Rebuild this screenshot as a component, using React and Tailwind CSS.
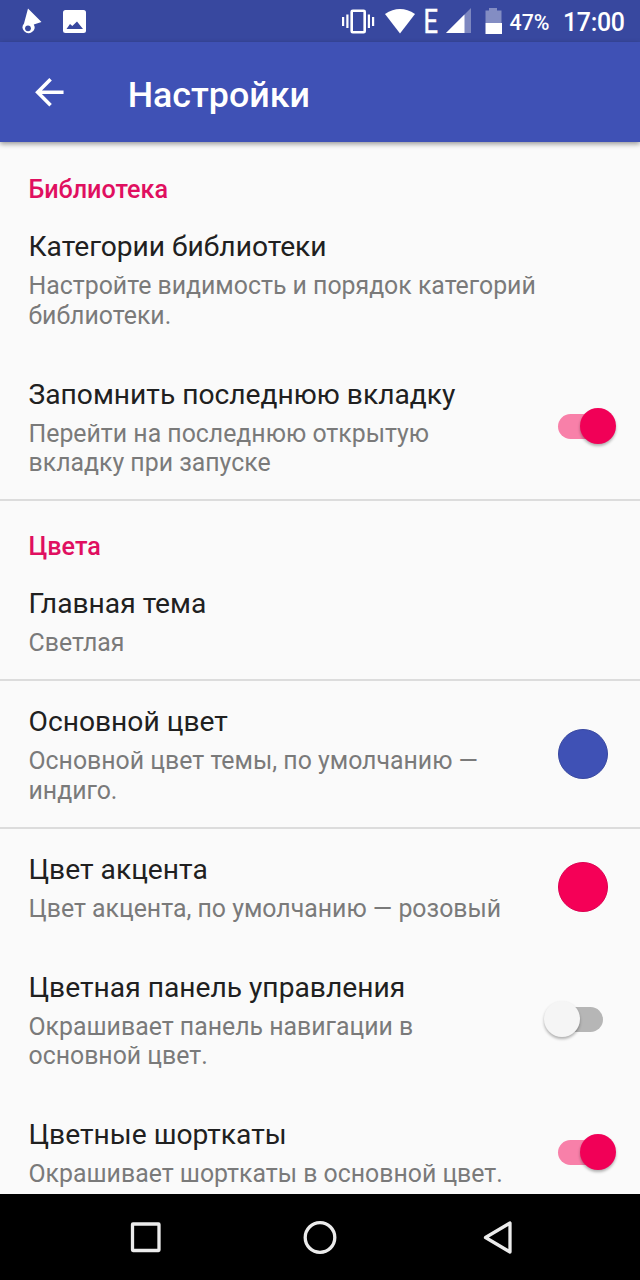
import { useState } from "react";

function StatusBar() {
    return (
        <div className="flex h-[42px] shrink-0 items-center bg-[#38489f]">
            <svg width="640" height="42" viewBox="0 0 640 42" fill="#fff">
                {/* Notifications */}
                <path d="M28 8.500L41.500 22L33.800 24.500A5.900 5.900 0 1 1 24 23.500Z" />
                <circle cx="28" cy="28.300" r="2.900" fill="#38489f" />
                <rect x="63" y="10" width="23" height="23" rx="2.5" />
                <path d="M66.500 29L70 24L72.300 26L77 21.500L83 29Z" fill="#38489f" />

                {/* Vibrate */}
                <rect x="351.7" y="10.7" width="13" height="21.6" rx="1" fill="none" stroke="#fff" strokeWidth="2.6" />
                <path d="M342 17h2.2v9h-2.2zM346.3 14.5h2.2v13.5h-2.2zM367.8 14.5h2.2v13.5h-2.2zM372 17h2.2v9h-2.2z" />

                {/* Wifi */}
                <path d="M385 14Q400 4 415 14L400 33.5Z" />

                {/* Signal */}
                <path d="M471 8V33H446Z" fillOpacity="0.35" />
                <path d="M464.5 14.5V33H446Z" />

                {/* Battery */}
                <path d="M485.5 10.5h3.5V8h8v2.5h4.5V23h-16z" fillOpacity="0.38" />
                <path d="M485.5 23h16.5v11h-16.5z" />

                <g fontFamily="Roboto, sans-serif">
                    <text x="423.5" y="32.7" fontSize="33.5" textLength="14.5" lengthAdjust="spacingAndGlyphs" stroke="#fff" strokeWidth="0.5">E</text>
                    <text x="509.5" y="29.5" fontSize="21.3" fontWeight="500" textLength="40">47%</text>
                    <text x="563" y="31" fontSize="24.9" fontWeight="500" textLength="62">17:00</text>
                </g>
            </svg>
        </div>
    );
}

function Toolbar() {
    return (
        <div className="z-10 flex h-[100px] shrink-0 items-center bg-[#3f51b5] pl-[28px] shadow-[0_2px_5px_rgba(0,0,0,0.4)]">
            <button className="mt-px">
                <svg width="42.67" height="42.67" viewBox="0 0 24 24" fill="#fff">
                    <path d="M20 11H7.83l5.59-5.59L12 4l-8 8 8 8 1.41-1.41L7.83 13H20v-2z" />
                </svg>
            </button>
            <h1 className="mt-[5px] ml-[57px] text-[35.8px] leading-[42px] font-medium text-white">Настройки</h1>
        </div>
    );
}

function Category({ children, className }) {
    return (
        <div className={`shrink-0 pl-[28.5px] text-[25.2px] leading-[30px] font-medium text-[#e00f60] ${className}`}>
            {children}
        </div>
    );
}

function Row({ title, summary, divider, children }) {
    return (
        <div
            className={`flex shrink-0 items-center justify-between border-b-2 pl-[28.5px] ${
                summary.length > 1 ? "h-[147.5px]" : "h-[118px]"
            } ${divider ? "border-[#dcdcdc]" : "border-transparent"}`}
        >
            <div className="pt-[2px] whitespace-nowrap">
                <div className="text-[28.2px] leading-[36px] text-[#202020]">{title}</div>
                <div className="mt-[6px] text-[24.85px] leading-[29.5px] text-[#7a7a7a]">
                    {summary.map((line) => (
                        <div key={line}>{line}</div>
                    ))}
                </div>
            </div>
            {children}
        </div>
    );
}

function Switch({ defaultOn }) {
    const [on, setOn] = useState(defaultOn);

    return (
        <button className="mr-6 flex h-9 w-[72px] items-center" onClick={() => setOn(!on)}>
            <span
                className={`ml-3.5 flex h-[25px] w-[45px] items-center rounded-full ${
                    on ? "bg-[#f880a9]" : "bg-[#b6b6b6]"
                }`}
            >
                <span
                    className={`size-9 shrink-0 rounded-full shadow-[0_2px_3px_rgba(0,0,0,0.3)] ${
                        on ? "ml-[22px] bg-[#f10057]" : "-ml-3.5 bg-[#f5f5f5]"
                    }`}
                />
            </span>
        </button>
    );
}

function ColorDot({ className }) {
    return <span className={`mr-8 size-[50px] rounded-full border ${className}`} />;
}

function NavBar() {
    return (
        <div className="flex h-[86px] shrink-0 items-center bg-black">
            <svg width="640" height="86" viewBox="0 0 640 86" fill="none" stroke="#ececec" strokeWidth="3.3">
                <rect x="132.5" y="30" width="26.5" height="26.5" rx="0.5" />
                <circle cx="320" cy="43.5" r="14.8" />
                <path d="M510 29V58L485.5 43.5Z" strokeLinejoin="round" />
            </svg>
        </div>
    );
}

export default function App() {
    return (
        <div className="flex h-[1280px] w-[640px] flex-col overflow-hidden bg-[#fafafa] font-['Roboto',sans-serif]">
            <StatusBar />
            <Toolbar />
            <div className="flex min-h-0 flex-1 flex-col overflow-hidden">
                <Category className="h-[64px] pt-[33px]">Библиотека</Category>
                <Row
                    title="Категории библиотеки"
                    summary={["Настройте видимость и порядок категорий", "библиотеки."]}
                />
                <Row
                    title="Запомнить последнюю вкладку"
                    summary={["Перейти на последнюю открытую", "вкладку при запуске"]}
                    divider
                >
                    <Switch defaultOn />
                </Row>

                <Category className="h-[62px] pt-[31px]">Цвета</Category>
                <Row title="Главная тема" summary={["Светлая"]} divider />
                <Row
                    title="Основной цвет"
                    summary={["Основной цвет темы, по умолчанию —", "индиго."]}
                    divider
                >
                    <ColorDot className="border-[#3848a0] bg-[#3f51b5]" />
                </Row>
                <Row title="Цвет акцента" summary={["Цвет акцента, по умолчанию — розовый"]}>
                    <ColorDot className="border-[#dc0050] bg-[#f50057]" />
                </Row>
                <Row
                    title="Цветная панель управления"
                    summary={["Окрашивает панель навигации в", "основной цвет."]}
                >
                    <Switch defaultOn={false} />
                </Row>
                <Row title="Цветные шорткаты" summary={["Окрашивает шорткаты в основной цвет."]}>
                    <Switch defaultOn />
                </Row>
            </div>
            <NavBar />
        </div>
    );
}
